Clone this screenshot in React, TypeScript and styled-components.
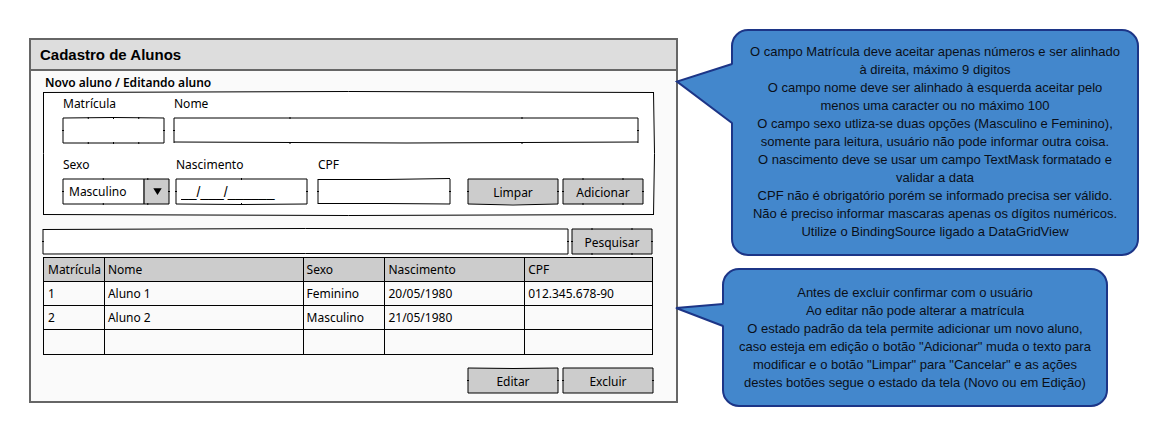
import React from "react";
import styled, { createGlobalStyle } from "styled-components";

const HAND = `"Noto Sans", "Open Sans", sans-serif`;
const SANS = `"Liberation Sans", Arial, sans-serif`;

const GlobalStyle = createGlobalStyle`
  *, *::before, *::after { box-sizing: border-box; }
  body { margin: 0; background: #fff; color: #000; font-family: ${SANS}; }
  h1, h2, p { margin: 0; }
`;

const Page = styled.main`
  display: grid;
  grid-template-columns: minmax(0, 649fr) minmax(0, 461fr);
  align-items: start;
  padding: 29px;
`;

/* ---------- hand-drawn outline ---------- */

type Side = [number, number, number];

interface SketchProps {
  top?: Side;
  right?: Side;
  bottom?: Side;
  left?: Side;
  marksX?: number[];
  markY?: boolean;
}

const Outline = styled.svg`
  position: absolute;
  inset: 0;
  width: 100%;
  height: 100%;
  overflow: visible;
  pointer-events: none;
  stroke: #000;
  stroke-width: 1;
`;

const flat: Side = [0, 0, 0];

function Horizontal({ s, marks }: { s: Side; marks: number[] }) {
  return (
    <>
      <line x1="0" y1={s[0]} x2="50%" y2={s[1]} />
      <line x1="50%" y1={s[1]} x2="100%" y2={s[2]} />
      {marks.map((m) => (
        <line key={m} x1={`${m}%`} x2={`${m}%`} y1="-1" y2="1" />
      ))}
    </>
  );
}

function Vertical({ s, mark }: { s: Side; mark: boolean }) {
  return (
    <>
      <line x1={s[0]} y1="0" x2={s[1]} y2="50%" />
      <line x1={s[1]} y1="50%" x2={s[2]} y2="100%" />
      {mark && <line x1="-1" x2="1" y1="50%" y2="50%" />}
    </>
  );
}

function Sketch({ top = flat, right = flat, bottom = flat, left = flat, marksX = [], markY = true }: SketchProps) {
  return (
    <Outline aria-hidden="true">
      <Horizontal s={top} marks={marksX} />
      <Vertical s={left} mark={markY} />
      <svg y="100%" overflow="visible">
        <Horizontal s={bottom} marks={marksX} />
      </svg>
      <svg x="100%" overflow="visible">
        <Vertical s={right} mark={markY} />
      </svg>
    </Outline>
  );
}

/* ---------- window ---------- */

const Window = styled.section`
  margin-top: 9px;
  border: 2px solid #666;
  background: #fafafa;
`;

const TitleBar = styled.header`
  display: flex;
  align-items: center;
  height: 31px;
  padding: 0 9px;
  background: #ddd;
  border-bottom: 2px solid #666;
`;

const Title = styled.h1`
  font: bold 15px/18px ${SANS};
`;

const WindowBody = styled.div`
  padding: 3px 22px 8px 12px;
  font-family: ${HAND};
  font-size: 12px;
`;

const GroupTitle = styled.h2`
  padding-left: 2px;
  font: 600 12px/18px ${HAND};
`;

const Group = styled.form`
  position: relative;
  display: flex;
  flex-direction: column;
  gap: 13px;
  padding: 3px 11px 11px 20px;
  background: #fff;
`;

const Row = styled.div<{ $gap: number; $inset?: number }>`
  display: flex;
  align-items: flex-end;
  gap: ${(p) => p.$gap}px;
  padding-right: ${(p) => p.$inset ?? 0}px;
`;

const PairRow = styled(Row)`
  flex: 0 1 244px;
  min-width: 0;
`;

const FieldBox = styled.div<{ $basis: number; $grow?: boolean }>`
  display: flex;
  flex-direction: column;
  gap: 5px;
  min-width: 0;
  flex: ${(p) => (p.$grow ? 1 : 0)} 1 ${(p) => p.$basis}px;
`;

const Label = styled.label`
  line-height: 18px;
`;

const Frame = styled.div`
  position: relative;
  display: flex;
  flex: none;
  min-width: 0;
  height: 25px;
  background: #fff;
`;

const SearchFrame = styled(Frame)`
  flex: 1;
`;

const TextInput = styled.input<{ $mask?: boolean; $end?: boolean }>`
  flex: 1;
  min-width: 0;
  width: 100%;
  padding: 0 5px;
  border: 0;
  background: transparent;
  color: #000;
  font: ${(p) => (p.$mask ? `14px ${SANS}` : `12px ${HAND}`)};
  text-align: ${(p) => (p.$end ? "right" : "left")};
`;

const Select = styled.select`
  appearance: none;
  flex: 1;
  min-width: 0;
  padding: 0 25px 0 6px;
  border: 0;
  background: transparent;
  color: #000;
  font: 12px ${HAND};
`;

const Arrow = styled.span`
  position: absolute;
  inset: 0 0 0 auto;
  display: grid;
  place-items: center;
  width: 26px;
  background: #ccc;
  border-left: 2px solid #555;
  pointer-events: none;
`;

const Actions = styled.div`
  display: flex;
  justify-content: flex-end;
  gap: 5px;
`;

const FormActions = styled(Actions)`
  margin-left: auto;
`;

const FooterActions = styled(Actions)`
  padding: 13px 1px 0 0;
`;

const ButtonBox = styled.button<{ $wide?: boolean }>`
  position: relative;
  width: ${(p) => (p.$wide ? 90 : 80)}px;
  height: 25px;
  padding: 3px 0 0;
  border: 0;
  background: #ccc;
  color: #000;
  font: 12px/18px ${HAND};
  cursor: pointer;
`;

const SearchRow = styled.form`
  display: flex;
  gap: 4px;
  padding: 14px 2px 3px 0;
`;

function SketchButton({ children, wide, sketch }: { children: string; wide?: boolean; sketch?: SketchProps }) {
  return (
    <ButtonBox type="button" $wide={wide}>
      {children}
      <Sketch {...sketch} />
    </ButtonBox>
  );
}

/* ---------- table ---------- */

const TableWrap = styled.div`
  padding-right: 1px;
`;

const Table = styled.table`
  width: 100%;
  table-layout: fixed;
  border-collapse: collapse;
  line-height: 18px;

  th, td {
    height: 24px;
    padding: 0 0 0 3px;
    border: 1px solid #000;
    font-weight: normal;
    text-align: left;
    white-space: nowrap;
  }
  th:first-child, td:first-child { padding-left: 4px; }
  th { background: #ccc; }
  tr:last-child td { height: 25px; }
`;

const columns = [
  { name: "Matrícula", width: 61 },
  { name: "Nome", width: 199 },
  { name: "Sexo", width: 82 },
  { name: "Nascimento", width: 140 },
  { name: "CPF", width: 128 },
];
const total = columns.reduce((n, c) => n + c.width, 0);

const rows = [
  ["1", "Aluno 1", "Feminino", "20/05/1980", "012.345.678-90"],
  ["2", "Aluno 2", "Masculino", "21/05/1980", ""],
  ["", "", "", "", ""],
];

/* ---------- callouts ---------- */

const Notes = styled.aside`
  display: flex;
  flex-direction: column;
  gap: 12px;
`;

const Note = styled.div<{ $left: number; $right: number; $pad: string }>`
  position: relative;
  margin: 0 ${(p) => p.$right}px 0 ${(p) => p.$left}px;
  padding: ${(p) => p.$pad};
  border: 2px solid #1c3587;
  border-radius: 17px;
  background: #4387cc;
  color: #0a0f18;
  font: 13px/18px ${SANS};
  text-align: center;
`;

const Tail = styled.svg<{ $top: number }>`
  position: absolute;
  right: 100%;
  top: ${(p) => p.$top}px;
  overflow: visible;
`;

const TailFill = styled.path`
  fill: #4387cc;
`;

const TailEdge = styled.path`
  fill: none;
  stroke: #1c3587;
  stroke-width: 2;
`;

export default function App() {
  return (
    <>
      <GlobalStyle />
      <Page>
        <Window>
          <TitleBar>
            <Title>Cadastro de Alunos</Title>
          </TitleBar>
          <WindowBody>
            <GroupTitle>Novo aluno / Editando aluno</GroupTitle>
            <Group>
              <Sketch
                top={[0.5, -0.5, 0.5]}
                bottom={[-0.5, 0.5, -0.5]}
                left={[0.5, 0.5, 0.5]}
                right={[-0.5, 0.5, -0.5]}
                markY={false}
              />
              <Row $gap={10} $inset={5}>
                <FieldBox $basis={101}>
                  <Label htmlFor="matricula">Matrícula</Label>
                  <Frame>
                    <TextInput id="matricula" maxLength={9} $end />
                    <Sketch top={[0, -0.5, 0]} marksX={[25, 50, 75]} />
                  </Frame>
                </FieldBox>
                <FieldBox $basis={101} $grow>
                  <Label htmlFor="nome">Nome</Label>
                  <Frame>
                    <TextInput id="nome" maxLength={100} />
                    <Sketch bottom={[-1, 0, -1]} marksX={[25, 75]} />
                  </Frame>
                </FieldBox>
              </Row>
              <Row $gap={11}>
                <PairRow $gap={7}>
                  <FieldBox $basis={106}>
                    <Label htmlFor="sexo">Sexo</Label>
                    <Frame>
                      <Select id="sexo" defaultValue="Masculino">
                        <option>Masculino</option>
                        <option>Feminino</option>
                      </Select>
                      <Arrow>
                        <svg width="9" height="7" viewBox="0 0 9 7" aria-hidden="true">
                          <path d="M0.3 0.3H8.7L4.5 6.9Z" />
                        </svg>
                      </Arrow>
                      <Sketch marksX={[38, 80]} />
                    </Frame>
                  </FieldBox>
                  <FieldBox $basis={131}>
                    <Label htmlFor="nascimento">Nascimento</Label>
                    <Frame>
                      <TextInput id="nascimento" defaultValue="__/___/______" $mask />
                      <Sketch bottom={[0, 0.5, 0]} marksX={[50]} />
                    </Frame>
                  </FieldBox>
                </PairRow>
                <FieldBox $basis={132}>
                  <Label htmlFor="cpf">CPF</Label>
                  <Frame>
                    <TextInput id="cpf" />
                    <Sketch top={[0.5, 0.5, -0.5]} bottom={[-0.5, -0.5, 0]} />
                  </Frame>
                </FieldBox>
                <FormActions>
                  <SketchButton wide sketch={{ bottom: [0, 1, 0] }}>Limpar</SketchButton>
                  <SketchButton sketch={{ marksX: [25, 75] }}>Adicionar</SketchButton>
                </FormActions>
              </Row>
            </Group>
            <SearchRow>
              <SearchFrame>
                <TextInput aria-label="Pesquisar aluno" />
                <Sketch top={[0.5, -0.5, 0]} bottom={[0, -0.5, 0]} />
              </SearchFrame>
              <SketchButton sketch={{ marksX: [25, 75] }}>Pesquisar</SketchButton>
            </SearchRow>
            <TableWrap>
              <Table>
                <colgroup>
                  {columns.map((c) => (
                    <col key={c.name} style={{ width: `${(c.width / total) * 100}%` }} />
                  ))}
                </colgroup>
                <thead>
                  <tr>
                    {columns.map((c) => (
                      <th key={c.name} scope="col">{c.name}</th>
                    ))}
                  </tr>
                </thead>
                <tbody>
                  {rows.map((r, i) => (
                    <tr key={i}>
                      {r.map((cell, j) => (
                        <td key={j}>{cell}</td>
                      ))}
                    </tr>
                  ))}
                </tbody>
              </Table>
            </TableWrap>
            <FooterActions>
              <SketchButton wide sketch={{ top: [0, 0.5, 0] }}>Editar</SketchButton>
              <SketchButton wide>Excluir</SketchButton>
            </FooterActions>
          </WindowBody>
        </Window>
        <Notes>
          <Note $left={53} $right={0} $pad="12px 16px 13px">
            <Tail $top={33} width="56" height="59" viewBox="0 0 56 59" aria-hidden="true">
              <TailFill d="M0 17.5L55 0L56 1V58L55 59Z" />
              <TailEdge d="M55 0L0 17.5L55 59" />
            </Tail>
            <p>O campo Matrícula deve aceitar apenas números e ser alinhado à direita, máximo 9 digitos</p>
            <p>O campo nome deve ser alinhado à esquerda aceitar pelo menos uma caracter ou no máximo 100</p>
            <p>O campo sexo utliza-se duas opções (Masculino e Feminino), somente para leitura, usuário não pode informar outra coisa.</p>
            <p>O nascimento deve se usar um campo TextMask formatado e validar a data</p>
            <p>CPF não é obrigatório porém se informado precisa ser válido.</p>
            <p>Não é preciso informar mascaras apenas os dígitos numéricos.</p>
            <p>Utilize o BindingSource ligado a DataGridView</p>
          </Note>
          <Note $left={44} $right={31} $pad="14px 12px 13px">
            <Tail $top={34} width="48" height="22" viewBox="0 0 48 22" aria-hidden="true">
              <TailFill d="M0 4L47 0L48 1V21L47 22Z" />
              <TailEdge d="M47 0L0 4L47 22" />
            </Tail>
            <p>Antes de excluir confirmar com o usuário</p>
            <p>Ao editar não pode alterar a matrícula</p>
            <p>O estado padrão da tela permite adicionar um novo aluno, caso esteja em edição o botão "Adicionar" muda o texto para modificar e o botão "Limpar" para "Cancelar" e as ações destes botões segue o estado da tela (Novo ou em Edição)</p>
          </Note>
        </Notes>
      </Page>
    </>
  );
}
